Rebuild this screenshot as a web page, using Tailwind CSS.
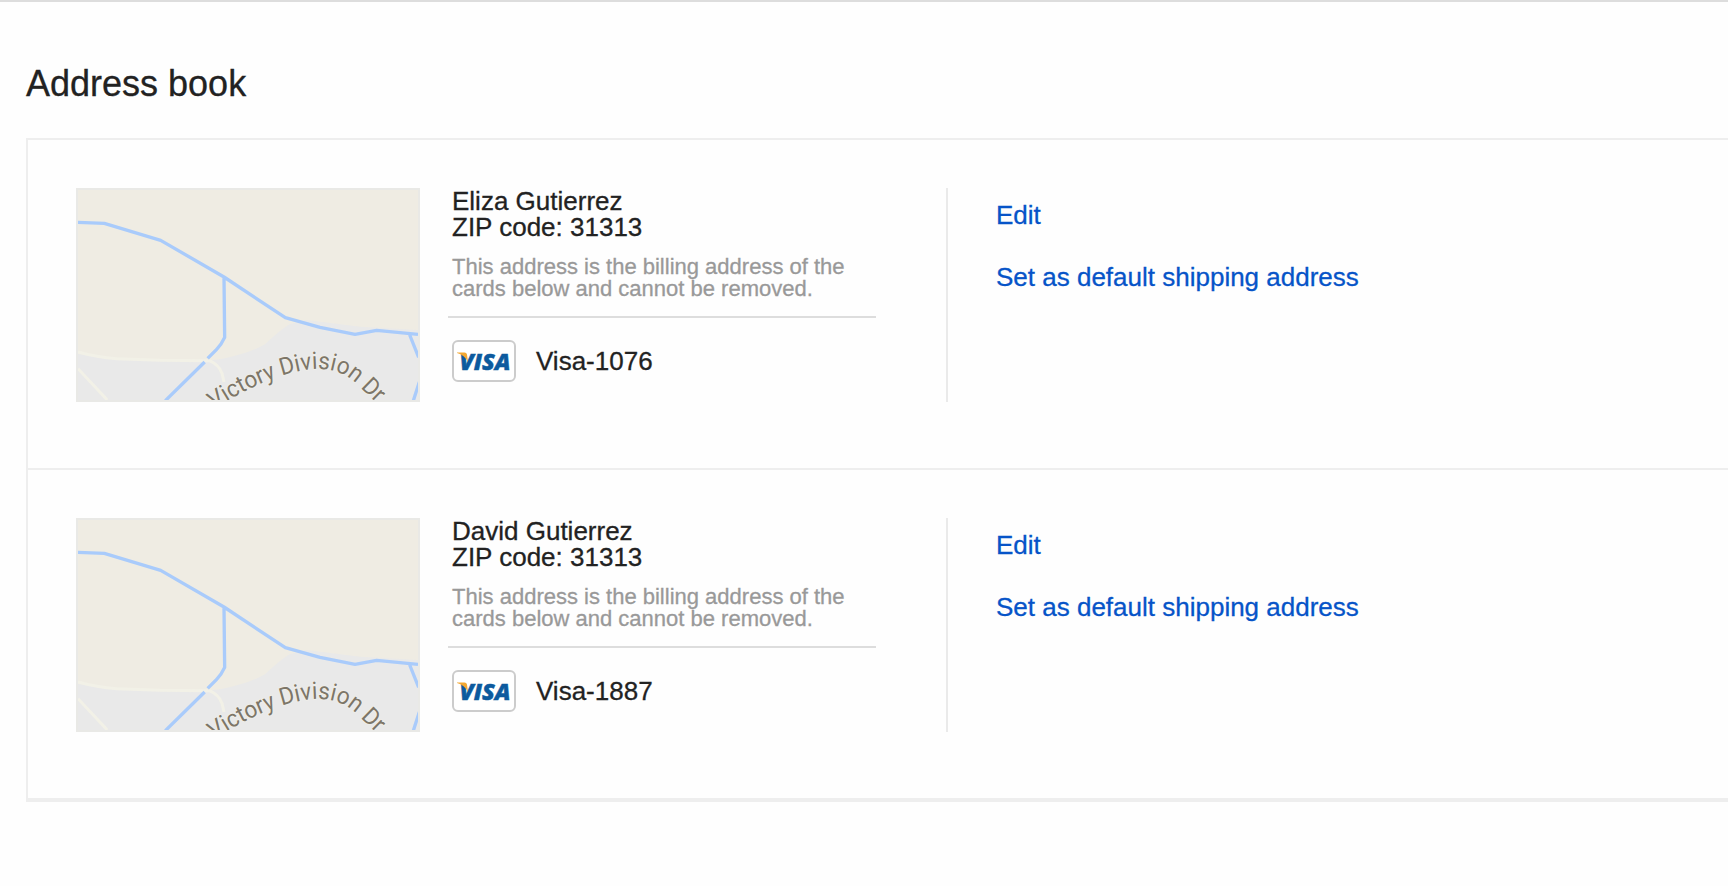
<!DOCTYPE html>
<html lang="en">
<head>
<meta charset="utf-8">
<title>Address book</title>
<script src="https://cdn.jsdelivr.net/npm/@tailwindcss/browser@4"></script>
</head>
<body class="h-[886px] overflow-hidden border-t-2 border-[#dddddd] bg-[#fefefe] font-['Liberation_Sans',Arial,sans-serif] text-[26px] leading-[26px] text-[#222222] [-webkit-text-stroke:0.3px]">
<svg class="hidden">
  <symbol id="map" viewBox="54 60 1020 630" preserveAspectRatio="none">
    <rect x="54" y="60" width="1020" height="630" fill="#efece3"/>
    <path d="M54 552L160 568L300 572L430 573L480 568Q570 550 616 522Q660 480 690 462L740 450L900 470L1074 480V690H54Z" fill="#e9e9e9"/>
    <g fill="none" stroke-linejoin="round">
      <path d="M54 546Q110 562 170 566L300 571L448 572Q475 582 486 610L492 636M54 596L142 690" stroke="#f2f1e7" stroke-width="9"/>
      <path d="M54 157L133 160L302 211L492 321L676 443L780 472L885 493L950 481L1074 493M492 321L494 502Q484 524 470 538L443 565M434 576L316 692M1048 492L1076 562M1078 636L1060 692" stroke="#a9cbfb" stroke-width="10"/>
    </g>
    <path id="road" d="M463 718C530 672 610 632 690 610S835 590 890 642L958 708" fill="none"/>
    <text font-family="Roboto, sans-serif" font-size="72" fill="#7d7668" stroke="#f0efea" stroke-width="5" paint-order="stroke"><textPath href="#road" textLength="548" lengthAdjust="spacingAndGlyphs">Victory Division Dr</textPath></text>
  </symbol>
  <symbol id="visa" viewBox="0 0 60 38">
    <text x="5.5" y="27.700" textLength="51" lengthAdjust="spacingAndGlyphs" font-family="'Open Sans', sans-serif" font-weight="800" font-style="italic" font-size="23" fill="#0c5a9e" stroke="#0c5a9e" stroke-width=".5">VISA</text>
    <path d="M3 10.500H10.500Q12.500 10.500 13 12.500L14 20Q10.500 13 3 11Z" fill="#f3a732"/>
  </symbol>
</svg>
<main class="pt-16 pl-[26px]">
  <h1 class="text-4xl leading-9">Address book</h1>
  <section class="mt-9 h-[664px] border-t-2 border-b-4 border-l-2 border-[#eeeeee]">
    <article class="flex h-[330px] border-b-2 border-[#eeeeee] pt-12 pl-12">
      <svg class="h-[214px] w-[344px] shrink-0 border-2 border-[#e9e9e6] [-webkit-text-stroke:0px]"><use href="#map" width="340" height="210"/></svg>
      <div class="ml-7 w-[428px] shrink-0">
        <div class="h-[130px] border-b-2 border-[#dddddd] pl-1">
          <p>Eliza Gutierrez</p>
          <p>ZIP code: 31313</p>
          <p class="mt-4 text-[22px] leading-[22px] whitespace-nowrap text-[#999999]">This address is the billing address of the<br>cards below and cannot be removed.</p>
        </div>
        <div class="mt-[22px] flex items-center gap-5 pl-1">
          <svg class="h-[42px] w-16 rounded-md border-2 border-[#cccccc] bg-white"><use href="#visa" width="60" height="38"/></svg>
          <span>Visa-1076</span>
        </div>
      </div>
      <div class="ml-[70px] flex h-[214px] flex-col items-start gap-9 border-l-2 border-[#eaeaea] pt-[14px] pl-12 text-[#0654c8]">
        <a>Edit</a>
        <a>Set as default shipping address</a>
      </div>
    </article>
    <article class="flex pt-12 pl-12">
      <svg class="h-[214px] w-[344px] shrink-0 border-2 border-[#e9e9e6] [-webkit-text-stroke:0px]"><use href="#map" width="340" height="210"/></svg>
      <div class="ml-7 w-[428px] shrink-0">
        <div class="h-[130px] border-b-2 border-[#dddddd] pl-1">
          <p>David Gutierrez</p>
          <p>ZIP code: 31313</p>
          <p class="mt-4 text-[22px] leading-[22px] whitespace-nowrap text-[#999999]">This address is the billing address of the<br>cards below and cannot be removed.</p>
        </div>
        <div class="mt-[22px] flex items-center gap-5 pl-1">
          <svg class="h-[42px] w-16 rounded-md border-2 border-[#cccccc] bg-white"><use href="#visa" width="60" height="38"/></svg>
          <span>Visa-1887</span>
        </div>
      </div>
      <div class="ml-[70px] flex h-[214px] flex-col items-start gap-9 border-l-2 border-[#eaeaea] pt-[14px] pl-12 text-[#0654c8]">
        <a>Edit</a>
        <a>Set as default shipping address</a>
      </div>
    </article>
  </section>
</main>
</body>
</html>
